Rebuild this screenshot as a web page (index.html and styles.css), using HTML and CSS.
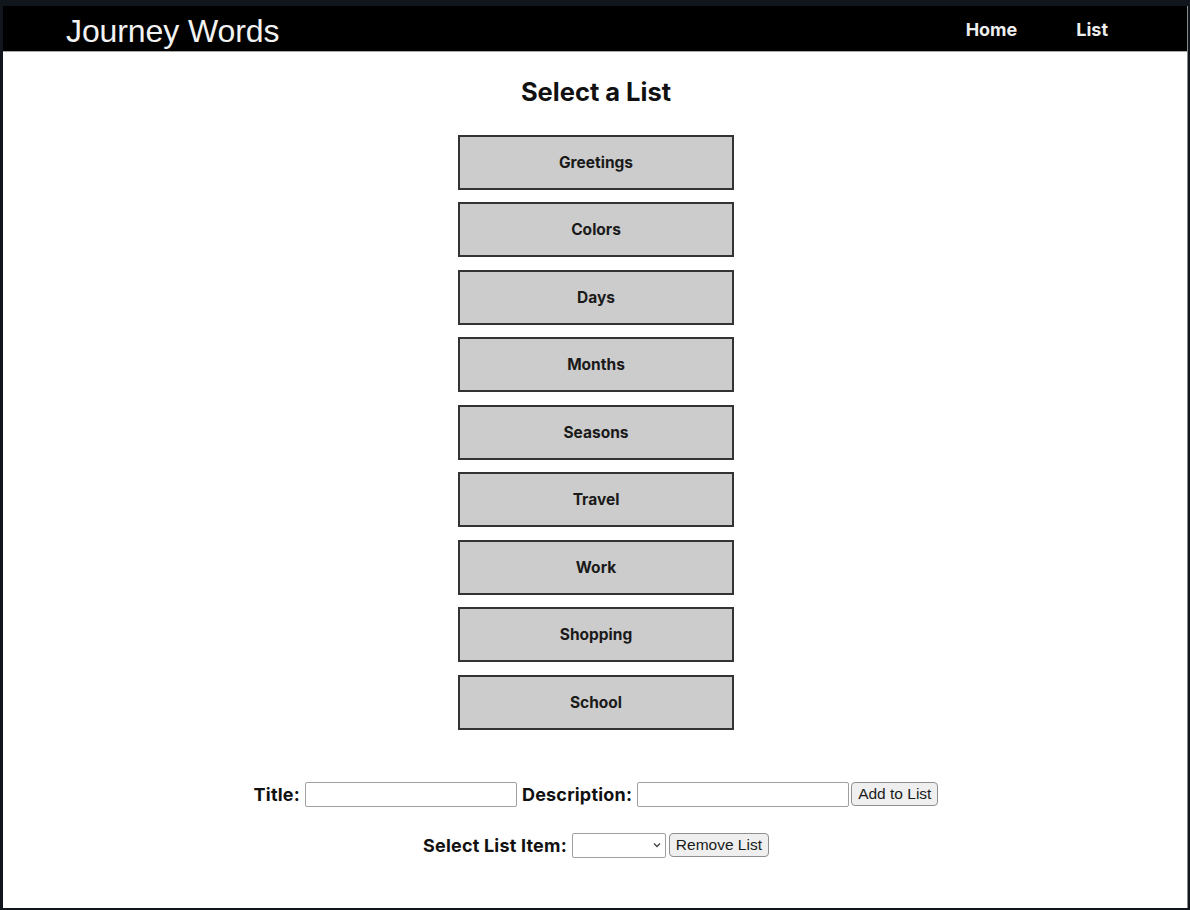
FILE: index.html
```html
<!DOCTYPE html>
<html lang="en">
<head>
<meta charset="utf-8">
<title>Journey Words</title>
<link rel="stylesheet" href="styles.css">
</head>
<body>
<div class="window">
  <header class="topbar">
    <div class="brand">Journey Words</div>
    <nav class="nav">
      <a class="nav-link" href="#">Home</a>
      <a class="nav-link" href="#">List</a>
    </nav>
  </header>
  <main class="content">
    <h2 class="heading">Select a List</h2>
    <div class="lists">
      <button class="list-btn">Greetings</button>
      <button class="list-btn">Colors</button>
      <button class="list-btn">Days</button>
      <button class="list-btn">Months</button>
      <button class="list-btn">Seasons</button>
      <button class="list-btn">Travel</button>
      <button class="list-btn">Work</button>
      <button class="list-btn">Shopping</button>
      <button class="list-btn">School</button>
    </div>
    <form class="form-row row-add">
      <label class="label">Title:</label>
      <input class="field" type="text">
      <label class="label">Description:</label>
      <input class="field" type="text">
      <button type="button" class="small-btn">Add to List</button>
    </form>
    <form class="form-row row-remove">
      <label class="label">Select List Item:</label>
      <div class="select">
        <svg class="chev" width="8" height="6" viewBox="0 0 8 6"><path d="M1 1.5 L4 4.5 L7 1.5" fill="none" stroke="#444" stroke-width="1.4"/></svg>
      </div>
      <button type="button" class="small-btn">Remove List</button>
    </form>
  </main>
</div>
</body>
</html>
```

FILE: styles.css
```css
html {
  background: #11151c;
}
body {
  margin: 0;
  font-family: Inter, "Liberation Sans", sans-serif;
  color: #111;
}
.window {
  margin: 6px 2px 2px 3px;
  height: 902px;
  background: #fff;
  border-right: 1px solid #8a8a8a;
  box-sizing: border-box;
  overflow: hidden;
}
.topbar {
  height: 46px;
  background: #000;
  border-bottom: 1px solid #a9a9a9;
  box-sizing: border-box;
  display: flex;
  align-items: center;
  justify-content: space-between;
  padding: 0 79px 0 63px;
}
.brand {
  color: #f2f2f2;
  font-family: "Liberation Sans", Arial, sans-serif;
  font-size: 32px;
  letter-spacing: -0.1px;
  padding-top: 5px;
}
.nav {
  display: flex;
  gap: 59px;
  padding-top: 2px;
}
.nav-link {
  color: #eee;
  text-decoration: none;
  font-weight: 700;
  font-size: 18px;
}
.content {
  display: flex;
  flex-direction: column;
  align-items: center;
  padding-left: 2px;
}
.heading {
  margin: 25px 0 0;
  font-size: 25.5px;
  font-weight: 700;
  line-height: 30px;
}
.lists {
  margin-top: 28px;
  display: flex;
  flex-direction: column;
  gap: 12.45px;
}
.list-btn {
  width: 276px;
  height: 55px;
  background: #cccccc;
  border: 2px solid #333;
  font-family: Inter, "Liberation Sans", sans-serif;
  font-weight: 700;
  font-size: 15.5px;
  color: #1a1a1a;
  padding: 0;
}
.form-row {
  display: flex;
  align-items: center;
  margin: 0;
}
.row-add {
  margin-top: 52px;
}
.row-remove {
  margin-top: 26px;
}
.label {
  font-weight: 700;
  font-size: 18px;
  letter-spacing: 0.2px;
  margin-right: 5px;
}
.field {
  width: 212px;
  height: 25px;
  box-sizing: border-box;
  border: 1px solid #a0a0a0;
  border-radius: 2px;
  margin: 0 5px 0 0;
  padding: 0;
}
.row-add .field:nth-of-type(2) {
  margin-right: 2px;
}
.small-btn {
  height: 24px;
  font-family: "Liberation Sans", Arial, sans-serif;
  font-size: 15.5px;
  color: #1a1a1a;
  background: #efefef;
  border: 1px solid #8f8f8f;
  border-radius: 4px;
  padding: 0 6px;
}
.select {
  width: 94px;
  height: 25px;
  box-sizing: border-box;
  border: 1px solid #a0a0a0;
  border-radius: 2px;
  display: flex;
  align-items: center;
  justify-content: flex-end;
  padding-right: 4px;
  margin-right: 3px;
}
```
